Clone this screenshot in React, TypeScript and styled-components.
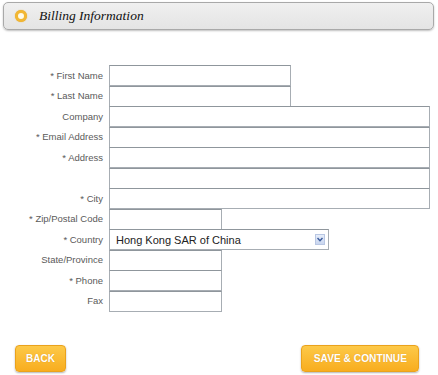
import React from 'react'
import styled, {createGlobalStyle} from 'styled-components'

const GlobalStyle = createGlobalStyle`
  html, body {
    margin: 0;
    padding: 0;
    background: #fff;
  }
  body {
    font-family: 'Liberation Sans', Arial, sans-serif;
  }
`

const Page = styled.div`
  width: 438px;
  height: 375px;
  padding: 2px 4px 0 3px;
  box-sizing: border-box;
  display: flex;
  flex-direction: column;
`

const Header = styled.div`
  height: 28px;
  box-sizing: border-box;
  border: 1px solid #a9a9a9;
  border-radius: 5px;
  background: linear-gradient(#f0f0f0, #e4e4e4);
  box-shadow: 0 1px 2px rgba(0, 0, 0, 0.25);
  display: flex;
  align-items: center;
  padding-left: 11px;
  gap: 12px;
`

const Bullet = styled.span`
  width: 12px;
  height: 12px;
  border-radius: 50%;
  box-sizing: border-box;
  border: 3px solid #f2b733;
  background: #fffbe9;
  box-shadow: 0 0 1px #e0a020;
`

const Title = styled.h2`
  margin: 0;
  font-family: 'Liberation Serif', 'Times New Roman', serif;
  font-style: italic;
  font-weight: normal;
  font-size: 13.5px;
  color: #111;
`

const Form = styled.div`
  margin-top: 35px;
  display: grid;
  grid-template-columns: 100px 1fr;
  grid-auto-rows: 20.5px;
  column-gap: 6px;
`

const Label = styled.label`
  font-size: 9.5px;
  color: #5a5a5a;
  text-align: right;
  align-self: center;
  white-space: nowrap;
`

const widths = {short: '113px', medium: '182px', full: '321px', select: '220px'}

const Field = styled.div<{$w: keyof typeof widths}>`
  width: ${p => widths[p.$w]};
  height: 21px;
  box-sizing: border-box;
  border: 1px solid #a7adb3;
  border-top-color: #8f969c;
  background: #fff;
`

const SelectBox = styled(Field)`
  display: flex;
  align-items: center;
  justify-content: space-between;
  padding: 0 3px 0 6px;
  font-size: 11px;
  color: #222;
`

const Arrow = styled.span`
  width: 10px;
  height: 11px;
  box-sizing: border-box;
  border: 1px solid #b9c7e3;
  background: linear-gradient(#e6edfa, #c9d6ef);
  display: flex;
  align-items: center;
  justify-content: center;
`

const Footer = styled.div`
  margin-top: auto;
  margin-bottom: 3px;
  display: flex;
  justify-content: space-between;
  padding: 0 15px 0 12px;
`

const Button = styled.button`
  height: 27px;
  border: 1px solid #eaa21c;
  border-radius: 4px;
  background: linear-gradient(#fdc948, #f8ad1f);
  box-shadow: 0 1px 2px rgba(0, 0, 0, 0.3);
  color: #fff;
  font-family: 'Liberation Sans', Arial, sans-serif;
  font-weight: bold;
  font-size: 10px;
  text-shadow: 0 0 1px rgba(160, 90, 0, 0.4);
  padding: 0 10px;
`

const WideButton = styled(Button)`
  padding: 0 11px 0 12px;
  font-size: 10.2px;
`

const rows: {label: string; w: keyof typeof widths}[] = [
  {label: '* First Name', w: 'medium'},
  {label: '* Last Name', w: 'medium'},
  {label: 'Company', w: 'full'},
  {label: '* Email Address', w: 'full'},
  {label: '* Address', w: 'full'},
  {label: '', w: 'full'},
  {label: '* City', w: 'full'},
  {label: '* Zip/Postal Code', w: 'short'},
]

const rowsAfter: {label: string; w: keyof typeof widths}[] = [
  {label: 'State/Province', w: 'short'},
  {label: '* Phone', w: 'short'},
  {label: 'Fax', w: 'short'},
]

export default function App() {
  return (
    <>
      <GlobalStyle />
      <Page>
        <Header>
          <Bullet />
          <Title>Billing Information</Title>
        </Header>
        <Form>
          {rows.map((r, i) => (
            <React.Fragment key={i}>
              <Label>{r.label}</Label>
              <Field $w={r.w} />
            </React.Fragment>
          ))}
          <Label>* Country</Label>
          <SelectBox $w="select">
            <span>Hong Kong SAR of China</span>
            <Arrow>
              <svg width="6" height="5" viewBox="0 0 6 5">
                <path d="M0.5 1 L3 3.8 L5.5 1" fill="none" stroke="#3a5a9a" strokeWidth="1.4" />
              </svg>
            </Arrow>
          </SelectBox>
          {rowsAfter.map((r, i) => (
            <React.Fragment key={i}>
              <Label>{r.label}</Label>
              <Field $w={r.w} />
            </React.Fragment>
          ))}
        </Form>
        <Footer>
          <Button>BACK</Button>
          <WideButton>SAVE &amp; CONTINUE</WideButton>
        </Footer>
      </Page>
    </>
  )
}
